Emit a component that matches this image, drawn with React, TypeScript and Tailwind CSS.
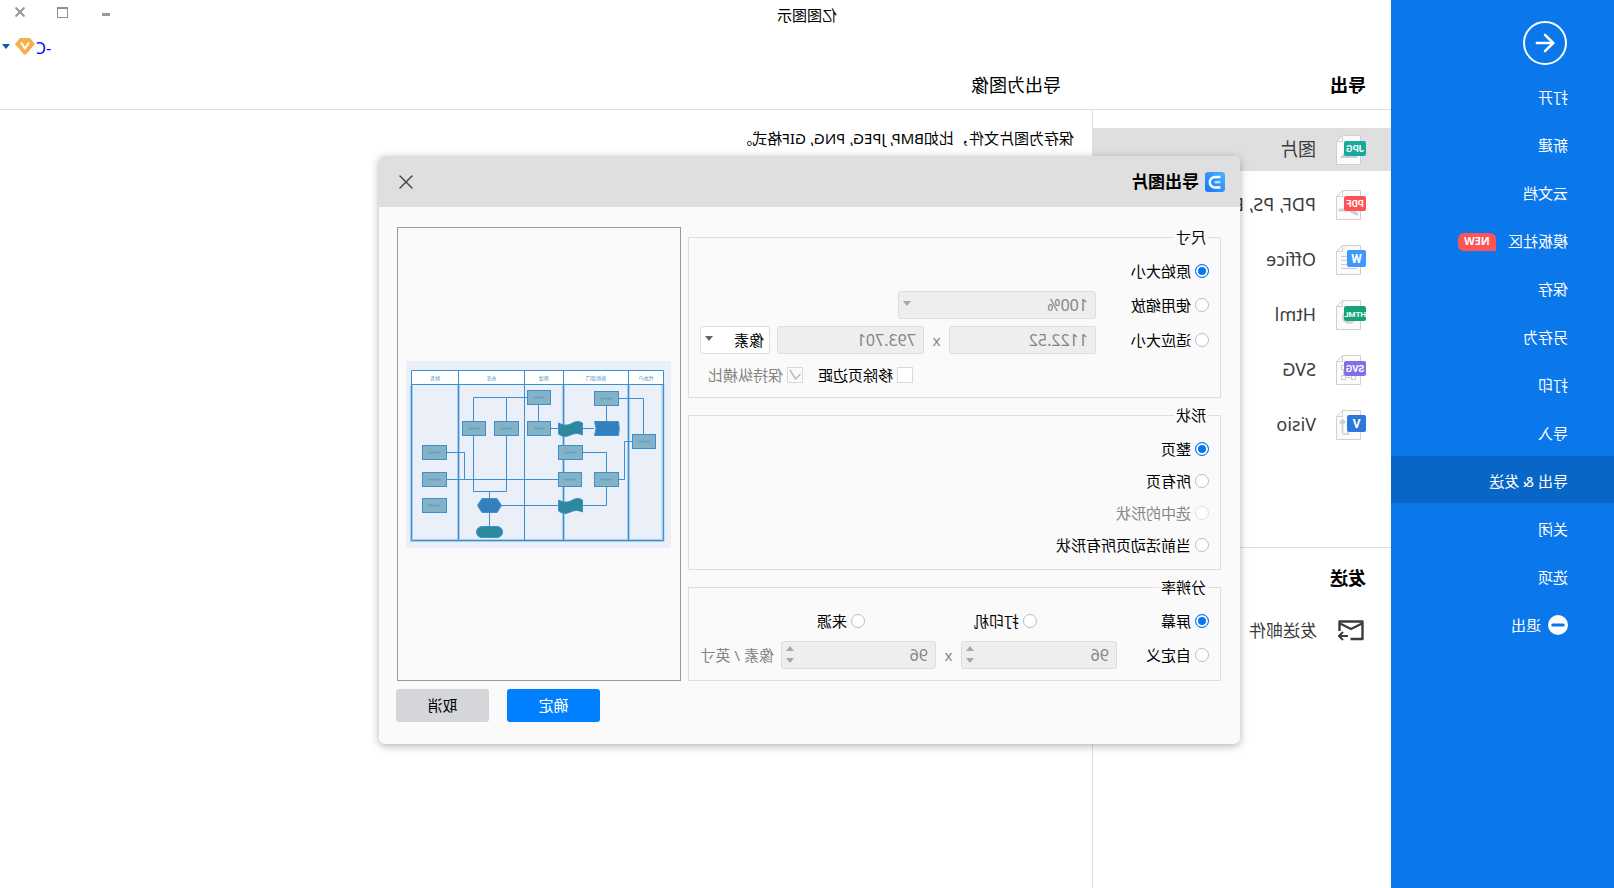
import { useState } from "react";
import type { ReactNode } from "react";
import { ArrowLeft, Minus, X } from "lucide-react";

const menuItems = [
  "打开",
  "新建",
  "云文档",
  "模板社区",
  "保存",
  "另存为",
  "打印",
  "导入",
  "导出 & 发送",
  "关闭",
  "选项",
];

const formats = [
  { label: "图片", badge: "JPG", color: "#17a99a", wide: true },
  { label: "PDF, PS, EPS", badge: "PDF", color: "#ff5055", wide: true },
  { label: "Office", badge: "W", color: "#3f98fe", wide: false },
  { label: "Html", badge: "HTML", color: "#14a377", wide: true },
  { label: "SVG", badge: "SVG", color: "#8470e6", wide: true },
  { label: "Visio", badge: "V", color: "#2b77da", wide: false },
];

function IconDetail({ badge }: { badge: string }) {
  switch (badge) {
    case "JPG":
      return <path d="M8 23l6-8 5 6 3-3 4 5z" fill="#cfcfcf" />;
    case "PDF":
      return <path d="M9 24c4-2 8-4 9-6M19 20h7" stroke="#cfcfcf" strokeWidth="3" strokeLinecap="round" fill="none" />;
    case "W":
      return <path d="M9 11.5h16M9 15.5h16M9 19.5h16M9 23.5h16" stroke="#cfcfcf" strokeWidth="1.2" />;
    case "HTML":
      return <circle cx="17" cy="17" r="7" fill="#d4d4d4" />;
    case "SVG":
      return (
        <path d="M10.5 10.5h4v4h-4zM20.5 10.5h4v4h-4zM10.5 20.5h4v4h-4zM20.5 20.5h4v4h-4zM14.5 22.5h6M22.5 14.5v6" stroke="#cfcfcf" fill="none" />
      );
    default:
      return (
        <>
          <path d="M23.5 8.5l3.5 3.5-3.5 3.5-3.5-3.5z" fill="#cfcfcf" />
          <path d="M23.5 15v8.5M23 24h-5.5v-3" stroke="#cfcfcf" strokeWidth="1.6" fill="none" />
        </>
      );
  }
}

function FileIcon({ badge, color, wide }: { badge: string; color: string; wide: boolean }) {
  return (
    <svg width="30" height="30" viewBox="0 0 30 30" className="shrink-0 font-[Roboto,sans-serif]">
      <path d="M5.5 .5h18l6 6v23h-24z" fill="#fbfbfb" stroke="#d0d0d0" />
      <path d="M23.5 .5v6h6" fill="none" stroke="#d0d0d0" />
      <IconDetail badge={badge} />
      <rect x="0" y={wide ? 6 : 5} width={wide ? 22 : 19} height={wide ? 15 : 17} rx="2" fill={color} />
      <text
        x={wide ? 11 : 9.5}
        y={wide ? 17 : 18}
        textAnchor="middle"
        fill="#fff"
        fontSize={badge === "HTML" ? 8 : wide ? 9.5 : 12}
        fontWeight="700"
      >
        {badge}
      </text>
    </svg>
  );
}

function MailIcon() {
  return (
    <svg width="26" height="21" viewBox="0 0 26 21" fill="none" stroke="#3c3c3c" strokeWidth="2.4">
      <path d="M24.5 11V1.5H1.5v17.5h12" strokeLinejoin="round" />
      <path d="M2 3.5l11 5.5 11-5.5" />
      <path d="M16 16h9M21 12l4 4-4 4" strokeWidth="2" />
    </svg>
  );
}

function Logo() {
  return (
    <svg width="20" height="20" viewBox="0 0 20 20">
      <defs>
        <linearGradient id="logo" x1="0" y1="0" x2="1" y2="1">
          <stop offset="0" stopColor="#4ab4ff" />
          <stop offset="1" stopColor="#1874fb" />
        </linearGradient>
      </defs>
      <rect width="20" height="20" rx="3" fill="url(#logo)" />
      <path d="M4.5 5H10a5 5 0 0 1 0 10.500H4.5" fill="none" stroke="#fff" strokeWidth="2.4" />
      <path d="M4.5 10.200h6" stroke="#c4e3ff" strokeWidth="2.2" />
    </svg>
  );
}

function Caret({ color }: { color: string }) {
  return (
    <svg width="8" height="5" viewBox="0 0 8 5">
      <path d="M0 0h8L4 5z" fill={color} />
    </svg>
  );
}

// [x, y, width] of the flow chart's process boxes, all 14 high
const boxes = [
  [15.5, 73.5, 23],
  [52.5, 30.5, 24],
  [52.5, 111.5, 24],
  [88.5, 84.5, 24],
  [89.5, 111.5, 23],
  [120.5, 29.5, 23],
  [120.5, 60.5, 23],
  [152.5, 60.5, 24],
  [185.5, 60.5, 23],
  [224.5, 84.5, 24],
  [224.5, 111.5, 24],
  [224.5, 137.5, 24],
];

const links = [
  "M27.5 73.5V37.5H52.5",
  "M64.5 44.5V60.5",
  "M77 67.5H88.5M112.5 67.5H120.5",
  "M132.5 43.5V60.5",
  "M143.5 36.5H197.5V60.5M164.5 36.5V60.5",
  "M197.5 74.5V130.5H164.5V74.5M181.5 130.5V137",
  "M181.5 152V165",
  "M170 144.5H112.5M88.5 144.5H64.5V125.5",
  "M88.5 91.5H64.5V111.5",
  "M38.5 80.5H46.5V118.5H52.5",
  "M112.5 118.5H224.5M206.5 118.5V91.5H224.5",
];

const lanes = [
  { x: 25, label: "代办户" },
  { x: 75, label: "质检部门" },
  { x: 127, label: "测试" },
  { x: 179.5, label: "仓库" },
  { x: 236, label: "财务" },
];

function FlowPreview() {
  return (
    <svg width="265" height="187" viewBox="0 0 265 187" className="bg-[#eaeff8]">
      <rect x="7.5" y="9.5" width="252" height="14" fill="#fff" />
      <path d="M8 24V179.5H259.5V24M42.5 24V179M107.5 24V179M212.5 24V179" fill="none" stroke="#a9cdec" strokeWidth="3" />
      <path
        d="M7.5 9.5H259.5V179.5H7.5zM7.5 23.5H259.5M42.5 9.5V179.5M107.5 9.5V179.5M146.5 9.5V179.5M212.5 9.5V179.5"
        fill="none"
        stroke="#3a90d2"
      />
      {lanes.map((l) => (
        <text key={l.x} x={l.x} y="18.5" textAnchor="middle" fontSize="5" fill="#3a90d2">
          {l.label}
        </text>
      ))}
      {links.map((d) => (
        <path key={d} d={d} fill="none" stroke="#3a90d2" />
      ))}
      {boxes.map(([x, y, w]) => (
        <g key={`${x}-${y}`}>
          <rect x={x} y={y} width={w} height="14" fill="#86b2c6" stroke="#3a90d2" />
          <path d={`M${x + 6} ${y + 7}h${w - 12}`} stroke="#5c9fcb" strokeWidth="2" strokeDasharray="2 .5" />
        </g>
      ))}
      <path d="M52.5 60.5H76.5q-3 7 0 14H52.5q-1.5-7 0-14z" fill="#3480bc" stroke="#3a90d2" />
      <path d="M88.5 62c5-3 8-1 12 1s8 1 12-1v11c-4 3-8 3-12 1s-8-2-12 0z" fill="#2e889e" stroke="#3a90d2" />
      <path d="M88.5 139c5-3 8-1 12 1s8 1 12-1v11c-4 3-8 3-12 1s-8-2-12 0z" fill="#2e889e" stroke="#3a90d2" />
      <path d="M174 137.5h15l4.5 7-4.5 7h-15l-4.5-7z" fill="#3480bc" stroke="#3a90d2" />
      <rect x="168.5" y="165.5" width="26" height="11" rx="5.5" fill="#2e889e" stroke="#3a90d2" />
    </svg>
  );
}

type RadioProps = {
  name: string;
  label: string;
  value: string;
  onChange: (v: string) => void;
  disabled?: boolean;
};

function Radio({ name, label, value, onChange, disabled }: RadioProps) {
  return (
    <label className="flex items-center gap-1 text-[15px] leading-5 has-disabled:text-[#858585]">
      <input
        type="radio"
        name={name}
        checked={value === label}
        disabled={disabled}
        onChange={() => onChange(label)}
        className="size-[14px] shrink-0 appearance-none rounded-full border border-[#bdbdbd] bg-white checked:border-[#0a77eb] checked:bg-[#0a77eb] checked:shadow-[inset_0_0_0_2px_#fff] disabled:border-[#dedede]"
      />
      {label}
    </label>
  );
}

function Group({ title, className, children }: { title: string; className: string; children: ReactNode }) {
  return (
    <section className={`relative border border-[#dfdfdf] px-[11px] ${className}`}>
      <h3 className="absolute -top-[11px] left-3 bg-[#fafafa] px-[2px] text-[15px] leading-5">{title}</h3>
      {children}
    </section>
  );
}

function Spin({ label, className }: { label: string; className: string }) {
  return (
    <span className={`relative h-7 ${className}`}>
      <input
        aria-label={label}
        defaultValue="96"
        disabled
        className="h-full w-full rounded-[3px] border border-[#dcdde0] bg-[#eeeeee] px-[7px] text-[16px] text-[#858585]"
      />
      <span className="absolute top-[5px] right-[5px] flex flex-col gap-[7px]">
        <button disabled aria-label="增加" className="rotate-180">
          <Caret color="#a8a8a8" />
        </button>
        <button disabled aria-label="减少">
          <Caret color="#a8a8a8" />
        </button>
      </span>
    </span>
  );
}

function ExportDialog() {
  const [size, setSize] = useState("原始大小");
  const [shape, setShape] = useState("整页");
  const [dpi, setDpi] = useState("屏幕");

  return (
    <div
      role="dialog"
      aria-label="导出图片"
      className="absolute top-[156px] left-[374px] z-20 w-[861px] rounded-md bg-[#fafafa] pb-[22px] shadow-[0_2px_8px_rgba(0,0,0,0.3)]"
    >
      <div className="flex h-[51px] items-center rounded-t-md bg-[#dfdfdf] pr-5 pl-[15px]">
        <Logo />
        <h2 className="ml-[6px] text-[17px] font-bold">导出图片</h2>
        <button aria-label="关闭" className="ml-auto">
          <X size={14} strokeWidth={1.4} viewBox="5 5 14 14" color="#444" />
        </button>
      </div>
      <div className="flex justify-between pr-[18px] pl-[19px]">
        <div className="w-[533px]">
          <Group title="尺寸" className="mt-[30px] h-[161px] pt-[19px]">
            <div className="flex h-7 items-center">
              <Radio name="size" label="原始大小" value={size} onChange={setSize} />
            </div>
            <div className="mt-[6px] flex h-7 items-center">
              <div className="w-[113px]">
                <Radio name="size" label="使用缩放" value={size} onChange={setSize} />
              </div>
              <span className="relative h-7 w-[198px]">
                <select
                  aria-label="缩放"
                  disabled
                  className="h-full w-full appearance-none rounded-[3px] border border-[#dcdde0] bg-[#eeeeee] px-[7px] text-[16px] text-[#858585] disabled:opacity-100"
                >
                  <option>100%</option>
                </select>
                <span className="pointer-events-none absolute top-[10px] right-[5px]">
                  <Caret color="#a8a8a8" />
                </span>
              </span>
            </div>
            <div className="mt-[7px] flex h-7 items-center">
              <div className="w-[113px]">
                <Radio name="size" label="适应大小" value={size} onChange={setSize} />
              </div>
              <input
                aria-label="宽度"
                disabled
                defaultValue="1122.52"
                className="h-7 w-[147px] rounded-[3px] border border-[#dcdde0] bg-[#eeeeee] px-[7px] text-[16px] text-[#858585]"
              />
              <span className="w-[25px] text-center text-[15px] text-[#858585]">x</span>
              <input
                aria-label="高度"
                disabled
                defaultValue="793.701"
                className="h-7 w-[147px] rounded-[3px] border border-[#dcdde0] bg-[#eeeeee] px-[7px] text-[16px] text-[#858585]"
              />
              <span className="relative ml-[7px] h-7 w-[70px]">
                <select
                  aria-label="单位"
                  className="h-full w-full appearance-none rounded-[3px] border border-[#dcdde0] bg-white px-[5px] text-[15px]"
                >
                  <option>像素</option>
                </select>
                <span className="pointer-events-none absolute top-[10px] right-[5px]">
                  <Caret color="#666" />
                </span>
              </span>
            </div>
            <div className="mt-[7px] flex h-7 items-center justify-end pr-2">
              <label className="flex items-center gap-1 text-[15px]">
                <input type="checkbox" className="size-4 appearance-none border border-[#d9dade] bg-white" />
                移除页边距
              </label>
              <label className="ml-[15px] flex items-center gap-1 text-[15px] text-[#858585]">
                <span className="relative size-4">
                  <input
                    type="checkbox"
                    defaultChecked
                    disabled
                    className="block size-4 appearance-none border border-[#d9dade] bg-[#fafafa]"
                  />
                  <svg width="16" height="16" viewBox="0 0 16 16" className="absolute inset-0">
                    <path d="M2.5 7l5 5 5.5-9" fill="none" stroke="#bbb" strokeWidth="1.5" />
                  </svg>
                </span>
                保持纵横比
              </label>
            </div>
          </Group>
          <Group title="形状" className="mt-[17px] flex h-[155px] flex-col gap-3 pt-[23px]">
            <Radio name="shape" label="整页" value={shape} onChange={setShape} />
            <Radio name="shape" label="所有页" value={shape} onChange={setShape} />
            <Radio name="shape" label="选中的形状" value={shape} onChange={setShape} disabled />
            <Radio name="shape" label="当前活动页所有形状" value={shape} onChange={setShape} />
          </Group>
          <Group title="分辨率" className="mt-[17px] h-[94px] pt-[19px]">
            <div className="flex h-7 items-center">
              <div className="w-[172px]">
                <Radio name="dpi" label="屏幕" value={dpi} onChange={setDpi} />
              </div>
              <div className="w-[172px]">
                <Radio name="dpi" label="打印机" value={dpi} onChange={setDpi} />
              </div>
              <Radio name="dpi" label="来源" value={dpi} onChange={setDpi} />
            </div>
            <div className="mt-[6px] flex h-7 items-center">
              <div className="w-[92px]">
                <Radio name="dpi" label="自定义" value={dpi} onChange={setDpi} />
              </div>
              <Spin label="水平分辨率" className="w-[156px]" />
              <span className="w-[25px] text-center text-[15px] text-[#858585]">x</span>
              <Spin label="垂直分辨率" className="w-[155px]" />
              <span className="ml-[7px] text-[15px] whitespace-nowrap text-[#858585]">像素 / 英寸</span>
            </div>
          </Group>
        </div>
        <div className="mt-5 flex h-[454px] w-[284px] items-center justify-center border border-[#9a9a9a]">
          <FlowPreview />
        </div>
      </div>
      <div className="mt-2 flex justify-end gap-[18px] pr-[17px]">
        <button className="h-[33px] w-[93px] rounded-[3px] bg-[#0080ff] text-[15px] text-white">确定</button>
        <button className="h-[33px] w-[93px] rounded-[3px] bg-[#d5d6da] text-[15px]">取消</button>
      </div>
    </div>
  );
}

export default function App() {
  const [active, setActive] = useState("导出 & 发送");
  const [format, setFormat] = useState("图片");

  return (
    <div className="relative flex min-h-screen -scale-x-100 bg-white font-['Noto_Sans','Noto_Sans_CJK_SC',sans-serif] text-black">
      <aside className="relative z-10 w-[223px] shrink-0 bg-[#0a77eb] text-[15px] text-white">
        <button
          aria-label="返回"
          className="mt-[21px] ml-[47px] flex size-11 items-center justify-center rounded-full border-2 border-white"
        >
          <ArrowLeft size={28} strokeWidth={2.2} />
        </button>
        <nav className="mt-[7px] flex flex-col gap-px">
          {menuItems.map((item) => (
            <button
              key={item}
              onClick={() => setActive(item)}
              className={`flex h-[47px] items-center pt-1 pl-[46px] ${active === item ? "bg-[#0766c6]" : ""}`}
            >
              {item}
              {item === "模板社区" && (
                <span className="ml-3 flex h-[18px] w-[38px] items-center justify-center rounded-md rounded-bl-none bg-[#ff5457] text-[11px] font-bold">
                  NEW
                </span>
              )}
            </button>
          ))}
          <button className="flex h-[47px] items-center gap-[7px] pt-[3px] pl-[46px]">
            <span className="flex size-5 items-center justify-center rounded-full bg-white text-[#0a77eb]">
              <Minus size={18} strokeWidth={4} />
            </span>
            退出
          </button>
        </nav>
      </aside>

      <main className="flex min-w-0 flex-1 flex-col">
        <header className="-ml-[223px] grid h-[30px] grid-cols-[1fr_auto_1fr] items-center">
          <span />
          <h1 className="text-[15px]">亿图图示</h1>
          <div className="flex items-center justify-end pr-[15px] pb-[6px]">
            <button aria-label="最小化" className="mr-[34px] pt-[5px]">
              <span className="block h-[3px] w-2 bg-[#999]" />
            </button>
            <button aria-label="最大化" className="mr-8 size-[11px] border border-t-2 border-[#8f8f8f]" />
            <button aria-label="关闭窗口">
              <X size={10} strokeWidth={3.5} viewBox="4 4 16 16" color="#999" />
            </button>
          </div>
        </header>
        <div className="flex h-8 items-center justify-end pr-[2px] text-[16px] text-[#0000ff]">
          <a href="#account" className="pt-1">
            -C
          </a>
          <svg width="20" height="17" viewBox="0 0 20 17" className="ml-px">
            <path d="M5 0h10l5 6-8.5 10q-1.5 1.5-3 0L0 6z" fill="#f4b04a" />
            <path d="M6 4.5l4 6 4-6" fill="none" stroke="#fff" strokeWidth="2" />
          </svg>
          <button aria-label="账户菜单" className="ml-[5px]">
            <Caret color="#0a59b8" />
          </button>
        </div>
        <div className="flex h-12 items-center border-b border-[#dfdfdf] text-[18px]">
          <h2 className="w-[299px] shrink-0 pl-[25px] font-bold">导出</h2>
          <h2 className="pl-[31px]">导出为图像</h2>
        </div>
        <div className="flex flex-1">
          <div className="w-[299px] shrink-0 border-r border-[#dfdfdf] pt-[18px]">
            <ul className="flex flex-col gap-3">
              {formats.map((f) => (
                <li key={f.label} className="-mr-px">
                  <button
                    onClick={() => setFormat(f.label)}
                    className={`flex h-[43px] w-full items-center gap-5 pl-[25px] text-[18px] text-[#3c3c3c] ${format === f.label ? "bg-[#dfdfdf]" : ""}`}
                  >
                    <FileIcon badge={f.badge} color={f.color} wide={f.wide} />
                    {f.label}
                  </button>
                </li>
              ))}
            </ul>
            <h2 className="mt-[101px] border-t border-[#dfdfdf] pt-4 pl-[25px] text-[18px] leading-7 font-bold">发送</h2>
            <button className="mt-[17px] flex h-[43px] items-center gap-[21px] pl-[27px] text-[17px] text-[#3c3c3c]">
              <MailIcon />
              发送邮件
            </button>
          </div>
          <p className="pt-[18px] pl-[18px] text-[15px] leading-5">保存为图片文件，比如BMP, JPEG, PNG, GIF格式。</p>
        </div>
      </main>

      <ExportDialog />
    </div>
  );
}
